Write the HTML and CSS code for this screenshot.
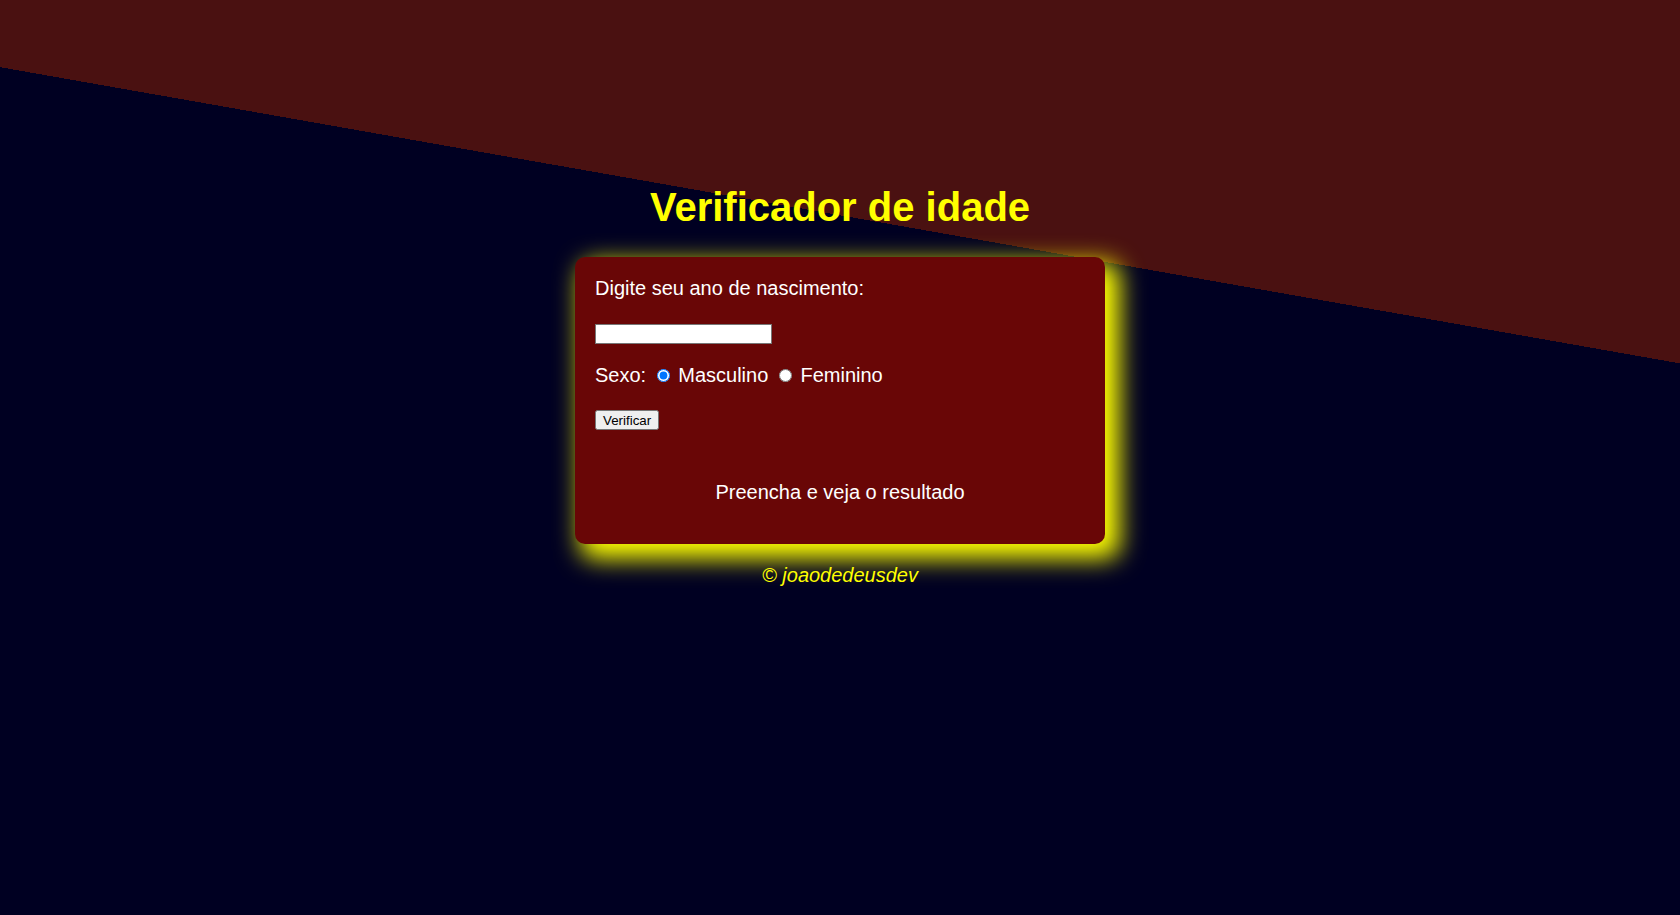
FILE: index.html
```html
<!DOCTYPE html>
<html lang="pt-br">
<head>
<meta charset="UTF-8">
<title>Verificador de idade</title>
<link rel="stylesheet" href="styles.css">
</head>
<body>
<header class="header">
  <h1 class="title">Verificador de idade</h1>
</header>
<section class="card">
  <p class="line">Digite seu ano de nascimento:</p>
  <p class="line"><input type="number" class="year-input"></p>
  <p class="line">Sexo: <input type="radio" name="sexo" class="radio" checked> <label>Masculino</label> <input type="radio" name="sexo" class="radio"> <label>Feminino</label></p>
  <p class="line"><input type="button" value="Verificar" class="btn"></p>
  <div class="result">
    <p class="line">Preencha e veja o resultado</p>
  </div>
</section>
<footer class="footer">
  <p class="copy">&copy; joaodedeusdev</p>
</footer>
</body>
</html>
```
FILE: styles.css
```css
html, body {
  margin: 0;
  padding: 0;
  min-height: 100vh;
}

body {
  font-family: "Liberation Sans", Arial, sans-serif;
  font-size: 20px;
  color: #ffffff;
  background: linear-gradient(190deg, #4a1111 30%, #000022 30%) no-repeat;
  background-size: 100% 100%;
  height: 915px;
  overflow: hidden;
}

.header {
  padding-top: 157px;
  text-align: center;
}

.title {
  margin: 27px 0;
  font-size: 40px;
  font-weight: bold;
  color: #ffff00;
  line-height: 46px;
}

.card {
  width: 490px;
  margin: 0 auto;
  padding: 0 20px;
  background-color: #690606;
  border-radius: 10px;
  box-shadow: 10px 10px 25px 5px #ffff00;
}

.line {
  margin: 20px 0;
  line-height: 23px;
}

.card::before {
  content: "";
  display: block;
  height: 0.1px;
}

.year-input {
  box-sizing: border-box;
  width: 177px;
  height: 20px;
  border: 1px solid #767676;
  background: #ffffff;
  padding: 0 2px;
  font-size: 13.33px;
  -moz-appearance: textfield;
}

.year-input::-webkit-inner-spin-button,
.year-input::-webkit-outer-spin-button {
  -webkit-appearance: none;
  margin: 0;
}

.radio {
  margin: 3px 3px 0 5px;
  width: 13px;
  height: 13px;
}

.btn {
  font-family: "Liberation Sans", Arial, sans-serif;
  font-size: 13.33px;
  height: 20px;
  padding: 0 6px;
  color: #000000;
}

.result {
  padding: 11px 0 20px;
  text-align: center;
}

.footer {
  text-align: center;
}

.copy {
  margin: 20px 0;
  font-style: italic;
  color: #ffff00;
  line-height: 23px;
}
```
